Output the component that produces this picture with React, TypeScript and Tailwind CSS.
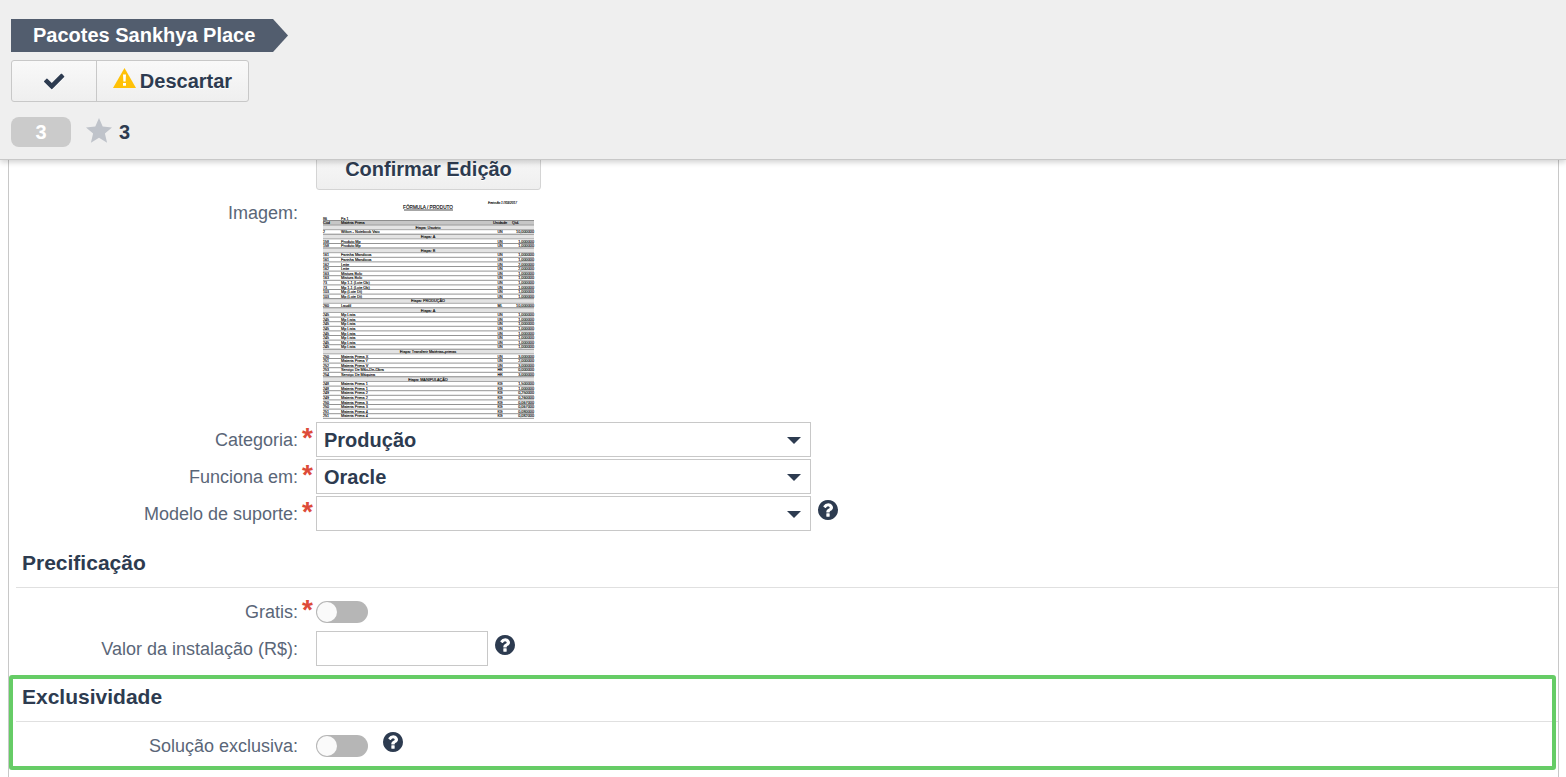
import type { ReactNode } from 'react';

type ReportRow = [code: string, name: string, unit: string, qty: string];

// A plain string is a stage heading, an array is an ingredient row
const REPORT: (string | ReportRow)[] = [
  'Etapa: Usuário',
  ['2', 'Wilton - Notebook Vaio', 'UN', '10,000000'],
  'Etapa: A',
  ['158', 'Produto Mp', 'UN', '1,000000'],
  ['158', 'Produto Mp', 'UN', '1,000000'],
  'Etapa: B',
  ['161', 'Farinha Mandioca', 'UN', '1,000000'],
  ['161', 'Farinha Mandioca', 'UN', '1,000000'],
  ['162', 'Leite', 'UN', '2,000000'],
  ['162', 'Leite', 'UN', '2,000000'],
  ['163', 'Mistura Bolo', 'UN', '1,000000'],
  ['163', 'Mistura Bolo', 'UN', '1,000000'],
  ['73', 'Mp 1.1 (Lote Ob)', 'UN', '1,000000'],
  ['73', 'Mp 1.1 (Lote Ob)', 'UN', '1,000000'],
  ['103', 'Mp (Lote Dt)', 'UN', '1,000000'],
  ['103', 'Mp (Lote Dt)', 'UN', '1,000000'],
  'Etapa: PRODUÇÃO',
  ['260', 'Laudil', 'ML', '10,000000'],
  'Etapa: A',
  ['245', 'Mp Lista', 'UN', '1,000000'],
  ['245', 'Mp Lista', 'UN', '1,000000'],
  ['245', 'Mp Lista', 'UN', '1,000000'],
  ['245', 'Mp Lista', 'UN', '1,000000'],
  ['245', 'Mp Lista', 'UN', '1,000000'],
  ['245', 'Mp Lista', 'UN', '1,000000'],
  ['245', 'Mp Lista', 'UN', '1,000000'],
  ['245', 'Mp Lista', 'UN', '1,000000'],
  'Etapa: Transferir Matérias-primas',
  ['250', 'Materia Prima X', 'UN', '3,000000'],
  ['251', 'Materia Prima Y', 'UN', '2,000000'],
  ['252', 'Materia Prima V', 'UN', '3,000000'],
  ['253', 'Serviço De Mão-De-Obra', 'HR', '0,000000'],
  ['254', 'Serviço De Máquina', 'HR', '3,000000'],
  'Etapa: MANIPULAÇÃO',
  ['248', 'Materia Prima 1', 'KG', '1,500000'],
  ['248', 'Materia Prima 1', 'KG', '1,000000'],
  ['249', 'Materia Prima 2', 'KG', '0,250000'],
  ['249', 'Materia Prima 2', 'KG', '0,260000'],
  ['250', 'Materia Prima 3', 'KG', '0,067000'],
  ['250', 'Materia Prima 3', 'KG', '0,067000'],
  ['251', 'Materia Prima 4', 'KG', '0,080000'],
  ['251', 'Materia Prima 4', 'KG', '0,082000'],
];

const TOP = 30.5;
const ROW = 4.6;

function ReportThumb() {
  return (
    <svg width="225" height="230" viewBox="0 0 225 230" className="block" role="img" aria-label="Imagem do pacote" fontFamily="Liberation Sans, Arial, sans-serif" fontSize="3.8" fill="#000" stroke="#000" strokeWidth=".12">
      <text x="172" y="14" fontSize="3.2" fontStyle="italic">Emissão 17/03/2017</text>
      <text x="112" y="19" fontSize="4.700" textAnchor="middle">FÓRMULA / PRODUTO</text>
      <path d="M88 20h49" stroke="#222" strokeWidth=".8" />
      <text x="7" y="29.500" fontSize="3.6">86</text>
      <text x="25" y="29.500" fontSize="3.6">Pa 1</text>
      <rect x="7" y={TOP} width="211" height={ROW} fill="#c6c6c6" stroke="none" />
      <path d={`M7 ${TOP}h211`} stroke="#555" strokeWidth=".6" />
      <text x="7" y="34.300">Cód</text>
      <text x="25" y="34.300">Matéria Prima</text>
      <text x="177" y="34.300">Unidade</text>
      <text x="196" y="34.300">Qtd.</text>
      {REPORT.map((row, i) => {
        const y = TOP + (i + 1) * ROW;
        if (typeof row === 'string') {
          return (
            <g key={i}>
              <rect x="7" y={y} width="211" height={ROW} fill="#e3e3e3" stroke="none" />
              <path d={`M7 ${y}h211M7 ${y + ROW}h211`} stroke="#777" strokeWidth=".6" />
              <text x="112" y={y + 3.7} textAnchor="middle">{row}</text>
            </g>
          );
        }
        return (
          <g key={i}>
            <path d={`M7 ${y + ROW}h211`} stroke="#666" strokeWidth=".7" />
            <text x="7" y={y + 3.7} fontSize="3.6">{row[0]}</text>
            <text x="25" y={y + 3.7}>{row[1]}</text>
            <text x="184" y={y + 3.7} textAnchor="middle" fontSize="3.6">{row[2]}</text>
            <text x="218" y={y + 3.7} textAnchor="end">{row[3]}</text>
          </g>
        );
      })}
    </svg>
  );
}

function CheckIcon() {
  return (
    <svg viewBox="0 0 1792 1792" className="size-6 fill-[#2d3b50] drop-shadow-[0_1px_0_#fff]" aria-hidden="true">
      <path d="M1671 566q0 20-14 34l-758 758-136 136q-34 28-68 0l-136-136-396-396q-28-34 0-68l170-170q34-28 68 0l328 329 690-691q34-28 68 0l170 170q14 14 14 34z" />
    </svg>
  );
}

function WarningIcon() {
  return (
    <svg width="23" height="20" viewBox="0 0 23 20" className="mb-1.5" aria-hidden="true">
      <path d="M11.500 0 23 20H0z" fill="#ffc107" />
      <path d="M10 6.500h3l-.4 7h-2.200zM10 15h3v2.800h-3z" fill="#fff" />
    </svg>
  );
}

function HelpIcon() {
  return (
    <button type="button" aria-label="Ajuda" className="mt-1 self-start">
      <svg viewBox="128 128 1536 1536" className="size-5 fill-[#2d3b50]" aria-hidden="true">
        <path
          d="M1024 1376v-192q0-14-9-23t-23-9h-192q-14 0-23 9t-9 23v192q0 14 9 23t23 9h192q14 0 23-9t9-23zm256-672q0-88-55.500-163t-138.500-116-170-41q-243 0-371 213-15 24 8 42l132 100q7 6 19 6 16 0 25-12 53-68 86-92 34-24 86-24 48 0 85.500 26t37.500 59q0 38-20 61t-68 45q-63 28-115.500 86.500t-52.500 125.500v36q0 14 9 23t23 9h192q14 0 23-9t9-23q0-19 21.500-49.500t54.500-49.500q32-18 49-28.500t46-35 44.500-48 28-60.500 12.500-81zm384 192q0 209-103 385.500t-279.500 279.500-385.500 103-385.500-103-279.500-279.500-103-385.500 103-385.500 279.500-279.500 385.500-103 385.500 103 279.500 279.500 103 385.500z"
        />
      </svg>
    </button>
  );
}

type FieldProps = {
  id: string;
  label: string;
  required?: boolean;
  children: ReactNode;
};

function Field({ id, label, required, children }: FieldProps) {
  return (
    <div className="flex h-[35px] items-center">
      <label htmlFor={id} className="w-[289px] shrink-0 text-right text-lg text-[#5a6678]">{label}</label>
      <span className="h-8 w-[18px] shrink-0 pl-1 text-[28px] leading-7 font-bold text-[#dd4b39]" aria-hidden="true">{required ? '*' : ''}</span>
      {children}
    </div>
  );
}

function Select({ id, value }: { id: string; value: string }) {
  return (
    <div className="relative mr-[7px] h-full w-[495px]">
      <select id={id} defaultValue={value} className="size-full appearance-none border border-[#c8c8c8] bg-white pr-10 pl-[7px] text-xl font-bold text-[#2d3b50]">
        <option value={value}>{value}</option>
      </select>
      <svg width="14" height="7" viewBox="0 0 14 7" className="pointer-events-none absolute top-[15px] right-[10px] fill-[#2d3b50]" aria-hidden="true">
        <path d="M0 0h14L7 7z" />
      </svg>
    </div>
  );
}

function Toggle({ id }: { id: string }) {
  return (
    <input
      id={id}
      type="checkbox"
      className="mr-[15px] h-[22px] w-[52px] appearance-none rounded-full bg-[#b6b6b6] p-px before:block before:size-5 before:rounded-full before:bg-[#fafafa] checked:bg-[#66cc66] checked:before:ml-[30px]"
    />
  );
}

function SectionTitle({ children }: { children: ReactNode }) {
  return (
    <h2 className="ml-[7px] h-[49px] border-b border-[#e0e0e0] pl-[6px] text-[21px] leading-[48px] font-bold text-[#2d3b50]">{children}</h2>
  );
}

export default function App() {
  return (
    <div className="bg-white font-['Liberation_Sans',Arial,sans-serif]">
      <header className="sticky top-0 z-10 border-b border-[#c8c8c8] bg-[#efefef] px-[11px] pt-[19px] pb-3 shadow-[0_2px_6px_rgba(0,0,0,0.2)]">
        <div className="flex h-[33px]">
          <h1 className="bg-[#525d6e] pr-[18px] pl-[22px] text-xl leading-[33px] font-bold text-white">Pacotes Sankhya Place</h1>
          <svg width="15" height="33" viewBox="0 0 15 33" className="fill-[#525d6e]" aria-hidden="true">
            <path d="M0 0 15 16.500 0 33z" />
          </svg>
        </div>

        <div className="mt-2 flex h-[42px] w-[238px] rounded-[3px] border border-[#c8c8c8] bg-linear-to-b from-[#f9f9f9] to-[#efefef] text-xl font-bold text-[#2d3b50]">
          <button type="button" aria-label="Confirmar" className="flex w-[84px] items-center justify-center">
            <CheckIcon />
          </button>
          <button type="button" className="flex flex-1 items-center justify-center gap-1 border-l border-[#c8c8c8] text-shadow-[0_1px_0_#fff]">
            <WarningIcon />
            Descartar
          </button>
        </div>

        <div className="mt-[15px] flex h-[30px] items-center text-xl font-bold text-[#2d3b50]">
          <span className="w-[60px] rounded-lg bg-[#cbcbcb] text-center leading-[30px] text-white">3</span>
          <svg width="26" height="25" viewBox="0 0 26 25" className="mr-[7px] mb-1 ml-[15px] fill-[#bfc3ca]" aria-hidden="true">
            <path d="M13 0l3.700 8.600 9.300.8-7.100 6.100 2.200 9.200L13 19.800l-8.100 4.900 2.200-9.200L0 9.400l9.300-.8z" />
          </svg>
          3
        </div>
      </header>

      <main className="-mt-3 mr-[7px] ml-2 border-x border-[#c8c8c8]">
        <button type="button" className="ml-[307px] block h-[42px] w-[225px] rounded-[3px] border border-[#d4d4d4] bg-linear-to-b from-[#f9f9f9] to-[#efefef] text-xl font-bold text-[#2d3b50] text-shadow-[0_1px_0_#fff]">
          Confirmar Edição
        </button>

        <div className="flex h-[232px] items-start">
          <span className="mr-[18px] w-[289px] text-right text-lg leading-[46px] text-[#5a6678]">Imagem:</span>
          <ReportThumb />
        </div>

        <div className="flex flex-col gap-[2px] pb-2">
          <Field id="categoria" label="Categoria:" required>
            <Select id="categoria" value="Produção" />
          </Field>
          <Field id="funciona" label="Funciona em:" required>
            <Select id="funciona" value="Oracle" />
          </Field>
          <Field id="suporte" label="Modelo de suporte:" required>
            <Select id="suporte" value="" />
            <HelpIcon />
          </Field>
        </div>

        <section className="pb-[7px]">
          <SectionTitle>Precificação</SectionTitle>
          <div className="flex flex-col gap-[2px] pt-[6px]">
            <Field id="gratis" label="Gratis:" required>
              <Toggle id="gratis" />
            </Field>
            <Field id="valor" label="Valor da instalação (R$):">
              <input id="valor" type="text" className="mr-[7px] h-full w-[172px] border border-[#c8c8c8] px-[7px] text-xl font-bold text-[#2d3b50]" />
              <HelpIcon />
            </Field>
          </div>
        </section>

        <section className="relative pb-[14px]">
          <SectionTitle>Exclusividade</SectionTitle>
          <div className="pt-[6px]">
            <Field id="exclusiva" label="Solução exclusiva:">
              <Toggle id="exclusiva" />
              <HelpIcon />
            </Field>
          </div>
          <div className="pointer-events-none absolute top-[2px] right-[2px] bottom-[7px] left-0 rounded-[3px] border-4 border-[#66cc66]" />
        </section>
      </main>
    </div>
  );
}
